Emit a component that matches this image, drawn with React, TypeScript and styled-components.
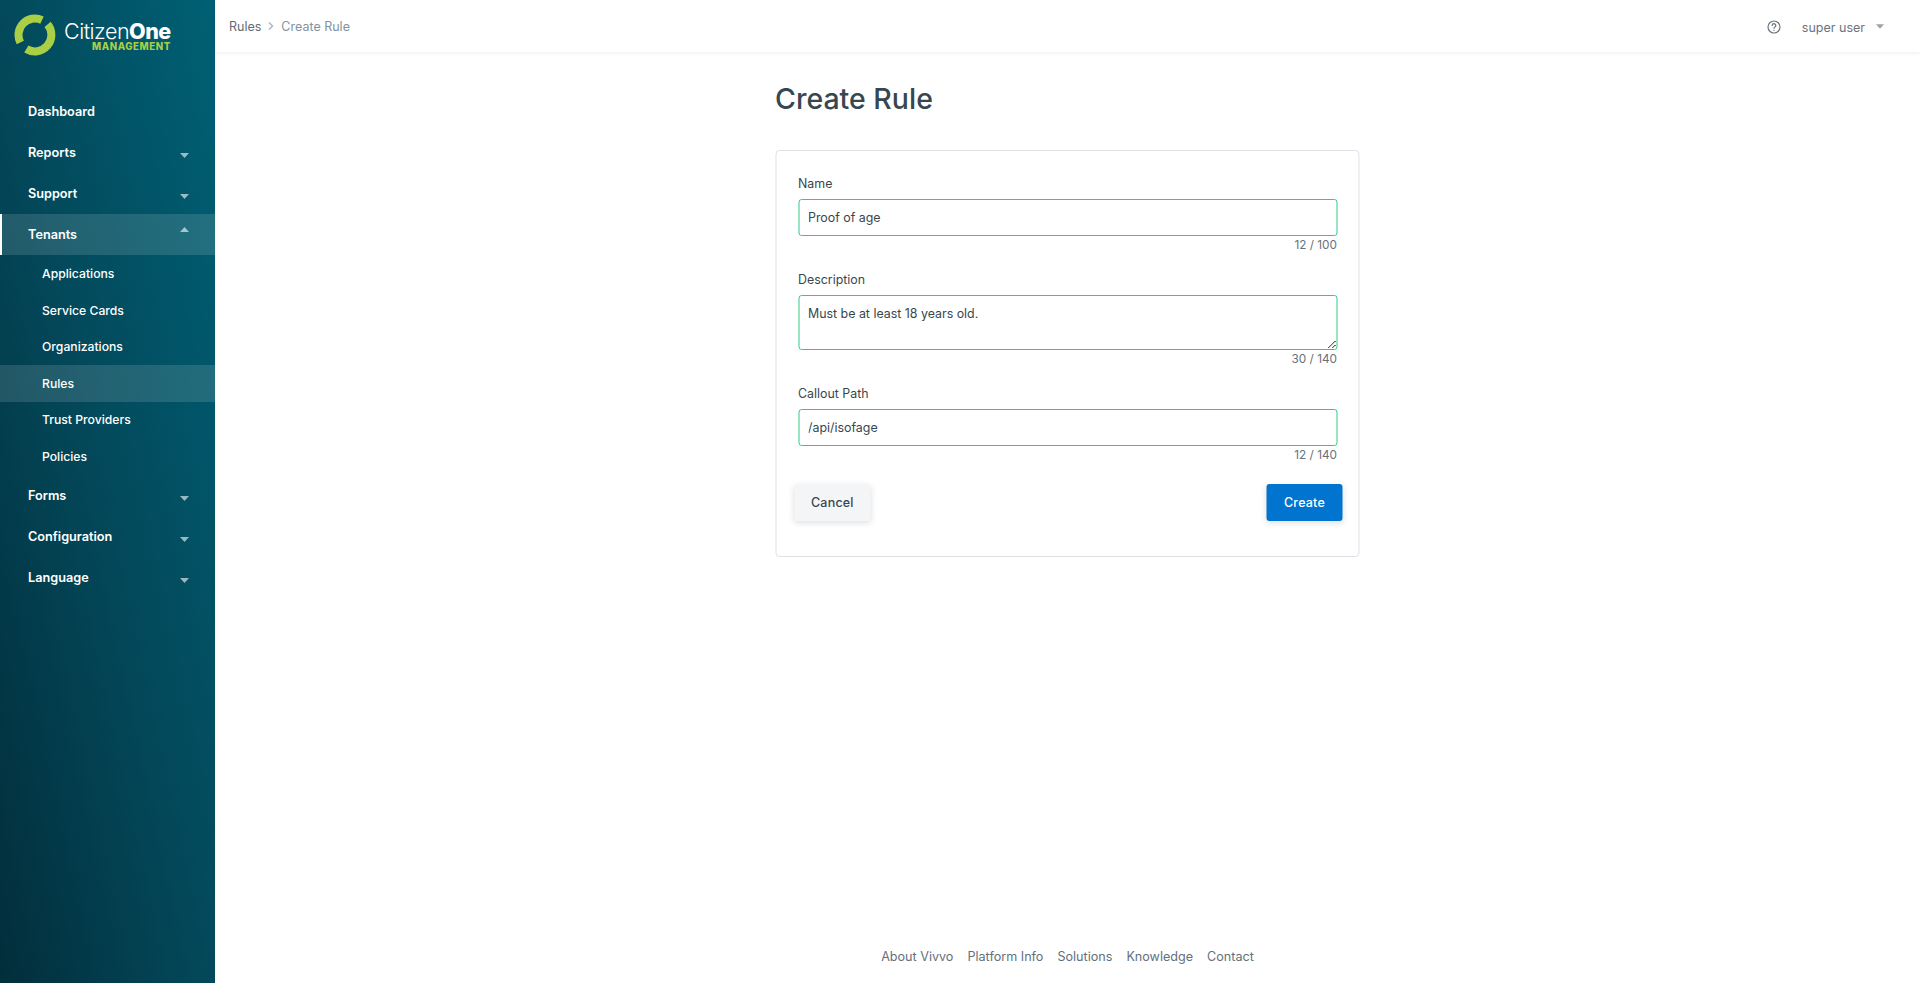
import styled, { createGlobalStyle } from "styled-components";

const GlobalStyle = createGlobalStyle`
  html, body {
    margin: 0;
    padding: 0;
    height: 100%;
    background: #fff;
    font-family: "Inter", "Liberation Sans", sans-serif;
    color: #37474f;
  }
  * { box-sizing: border-box; }
`;

const Shell = styled.div`
  display: flex;
  width: 100%;
  height: 983px;
  overflow: hidden;
`;

const Sidebar = styled.aside`
  width: 215px;
  flex-shrink: 0;
  background: linear-gradient(to top right, #022e3b 0%, #03495b 50%, #006074 100%);
  display: flex;
  flex-direction: column;
`;

const LogoRow = styled.div`
  height: 91px;
  padding: 14px 0 0 14px;
  display: flex;
  align-items: flex-start;
  gap: 8px;
`;

const LogoText = styled.div`
  display: flex;
  flex-direction: column;
  align-items: flex-end;
  padding-top: 7px;
`;

const Brand = styled.div`
  font-size: 21.5px;
  line-height: 21px;
  font-weight: 300;
  color: #fff;
  letter-spacing: -0.5px;
  b {
    font-weight: 800;
  }
`;

const BrandSub = styled.div`
  font-size: 9.7px;
  line-height: 10px;
  font-weight: 800;
  color: #a8cf45;
  letter-spacing: 0.55px;
`;

const NavItem = styled.div<{ $active?: boolean }>`
  height: 41px;
  padding: 0 26px 0 28px;
  display: flex;
  align-items: center;
  justify-content: space-between;
  font-size: 12.7px;
  font-weight: 600;
  color: #fff;
  background: ${(p) => (p.$active ? "rgba(255,255,255,0.13)" : "transparent")};
  box-shadow: ${(p) => (p.$active ? "inset 2px 0 0 #fff" : "none")};
`;

const SubList = styled.div`
  display: flex;
  flex-direction: column;
  padding: 0.5px 0;
`;

const SubItem = styled.div<{ $active?: boolean }>`
  height: 36.5px;
  padding-left: 42px;
  display: flex;
  align-items: center;
  font-size: 12.2px;
  font-weight: 500;
  color: #fff;
  background: ${(p) => (p.$active ? "rgba(255,255,255,0.13)" : "transparent")};
`;

const Caret = styled.svg<{ $up?: boolean }>`
  width: 9px;
  height: 5px;
  fill: rgba(255, 255, 255, 0.6);
  transform: ${(p) => (p.$up ? "translateY(-5px) rotate(180deg)" : "translateY(3px)")};
`;

const Main = styled.div`
  flex: 1;
  display: flex;
  flex-direction: column;
  min-width: 0;
`;

const Header = styled.header`
  height: 52px;
  padding: 0 36px 0 14px;
  display: flex;
  align-items: center;
  justify-content: space-between;
  background: #fff;
  box-shadow: 0 1px 4px rgba(0, 0, 0, 0.08);
  font-size: 12.5px;
`;

const Crumbs = styled.div`
  display: flex;
  align-items: center;
  gap: 7px;
`;

const CrumbLink = styled.span`
  color: #5f6b76;
`;

const CrumbCurrent = styled.span`
  color: #8492a0;
`;

const CrumbSep = styled.svg`
  width: 6px;
  height: 8px;
  fill: none;
  stroke: #b4bac0;
  stroke-width: 1.6;
`;

const UserArea = styled.div`
  display: flex;
  align-items: center;
  color: #6b7480;
  padding-top: 2px;
`;

const HelpIcon = styled.svg`
  width: 14px;
  height: 14px;
  margin-right: 21px;
  fill: none;
  stroke: #6b7480;
  stroke-width: 1.2;
  stroke-linecap: round;
`;

const UserCaret = styled.svg`
  width: 8px;
  height: 5px;
  margin: -2px 0 0 11px;
  fill: #9aa1a9;
`;

const Content = styled.main`
  flex: 1;
  width: 584px;
  margin: 0 auto;
  transform: translateX(-0.5px);
`;

const Title = styled.h1`
  margin: 27px 0 32px;
  font-size: 28.5px;
  line-height: 39px;
  font-weight: 500;
  color: #37474f;
`;

const Card = styled.form`
  height: 407px;
  padding: 22px 16px 0 22px;
  border: 1px solid #dfe1e6;
  border-radius: 4px;
  background: #fff;
`;

const Field = styled.div`
  display: flex;
  flex-direction: column;
  margin-right: 5px;
`;

const Label = styled.label`
  font-size: 12.4px;
  line-height: 20px;
  color: #37474f;
  padding-top: 1px;
  margin-bottom: 5px;
`;

const inputStyles = `
  width: 100%;
  border: 1px solid #2ecc87;
  border-radius: 3px;
  padding: 0 9px;
  font-family: inherit;
  font-size: 12.4px;
  color: #37474f;
  background: #fff;
  outline: none;
`;

const TextInput = styled.input`
  ${inputStyles}
  height: 36.5px;
  padding-top: 1px;
`;

const TextArea = styled.textarea`
  ${inputStyles}
  display: block;
  height: 55px;
  padding-top: 10px;
  line-height: 16px;
`;

const Counter = styled.div`
  font-size: 11.8px;
  line-height: 18px;
  color: #68717c;
  text-align: right;
  margin-bottom: 15.3px;
`;

const Actions = styled.div`
  display: flex;
  justify-content: space-between;
  margin: 5px 0 0 -4px;
`;

const Button = styled.button<{ $primary?: boolean }>`
  height: 37px;
  padding: 0 17px;
  border: 0;
  border-radius: 3px;
  font-family: inherit;
  font-size: 12.5px;
  font-weight: 500;
  letter-spacing: 0.2px;
  color: ${(p) => (p.$primary ? "#fff" : "#37474f")};
  background: ${(p) => (p.$primary ? "#0074cf" : "#f4f5f7")};
  box-shadow: 0 2px 6px rgba(0, 0, 0, 0.13);
`;

const Footer = styled.footer`
  height: 34px;
  display: flex;
  justify-content: center;
  gap: 14px;
  font-size: 12.6px;
  color: #64707d;
`;

const navTop = ["Reports", "Support"];
const navSub = ["Applications", "Service Cards", "Organizations", "Rules", "Trust Providers", "Policies"];
const navBottom = ["Forms", "Configuration", "Language"];
const footerLinks = ["About Vivvo", "Platform Info", "Solutions", "Knowledge", "Contact"];

function Logo() {
  return (
    <svg width="42" height="42" viewBox="0 0 42 42" fill="none" stroke="#a8cf45" strokeWidth="8">
      <path d="M33.6 10.4 A16.5 16.5 0 0 1 12.3 35" />
      <path d="M6.3 28.5 A16.5 16.5 0 0 1 28 6.05" />
    </svg>
  );
}

function DownCaret({ up }: { up?: boolean }) {
  return (
    <Caret $up={up} viewBox="0 0 9 5">
      <path d="M0 0h9L4.5 5z" />
    </Caret>
  );
}

function App() {
  return (
    <>
      <GlobalStyle />
      <Shell>
        <Sidebar>
          <LogoRow>
            <Logo />
            <LogoText>
              <Brand>
                Citizen<b>One</b>
              </Brand>
              <BrandSub>MANAGEMENT</BrandSub>
            </LogoText>
          </LogoRow>
          <NavItem>Dashboard</NavItem>
          {navTop.map((item) => (
            <NavItem key={item}>
              {item}
              <DownCaret />
            </NavItem>
          ))}
          <NavItem $active>
            Tenants
            <DownCaret up />
          </NavItem>
          <SubList>
            {navSub.map((item) => (
              <SubItem key={item} $active={item === "Rules"}>
                {item}
              </SubItem>
            ))}
          </SubList>
          {navBottom.map((item) => (
            <NavItem key={item}>
              {item}
              <DownCaret />
            </NavItem>
          ))}
        </Sidebar>
        <Main>
          <Header>
            <Crumbs>
              <CrumbLink>Rules</CrumbLink>
              <CrumbSep viewBox="0 0 6 8">
                <path d="M1 0.5 4.5 4 1 7.5" />
              </CrumbSep>
              <CrumbCurrent>Create Rule</CrumbCurrent>
            </Crumbs>
            <UserArea>
              <HelpIcon viewBox="0 0 14 14">
                <circle cx="7" cy="7" r="6" />
                <path d="M5.2 5.4a1.8 1.8 0 1 1 2.7 1.6c-.6.3-.9.7-.9 1.3" />
                <path d="M7 10.3v.1" />
              </HelpIcon>
              super user
              <UserCaret viewBox="0 0 9 5">
                <path d="M0 0h9L4.5 5z" />
              </UserCaret>
            </UserArea>
          </Header>
          <Content>
            <Title>Create Rule</Title>
            <Card>
              <Field>
                <Label>Name</Label>
                <TextInput readOnly value="Proof of age" />
                <Counter>12 / 100</Counter>
              </Field>
              <Field>
                <Label>Description</Label>
                <TextArea readOnly value="Must be at least 18 years old." />
                <Counter>30 / 140</Counter>
              </Field>
              <Field>
                <Label>Callout Path</Label>
                <TextInput readOnly value="/api/isofage" />
                <Counter>12 / 140</Counter>
              </Field>
              <Actions>
                <Button type="button">Cancel</Button>
                <Button type="button" $primary>
                  Create
                </Button>
              </Actions>
            </Card>
          </Content>
          <Footer>
            {footerLinks.map((link) => (
              <span key={link}>{link}</span>
            ))}
          </Footer>
        </Main>
      </Shell>
    </>
  );
}

export default App;
